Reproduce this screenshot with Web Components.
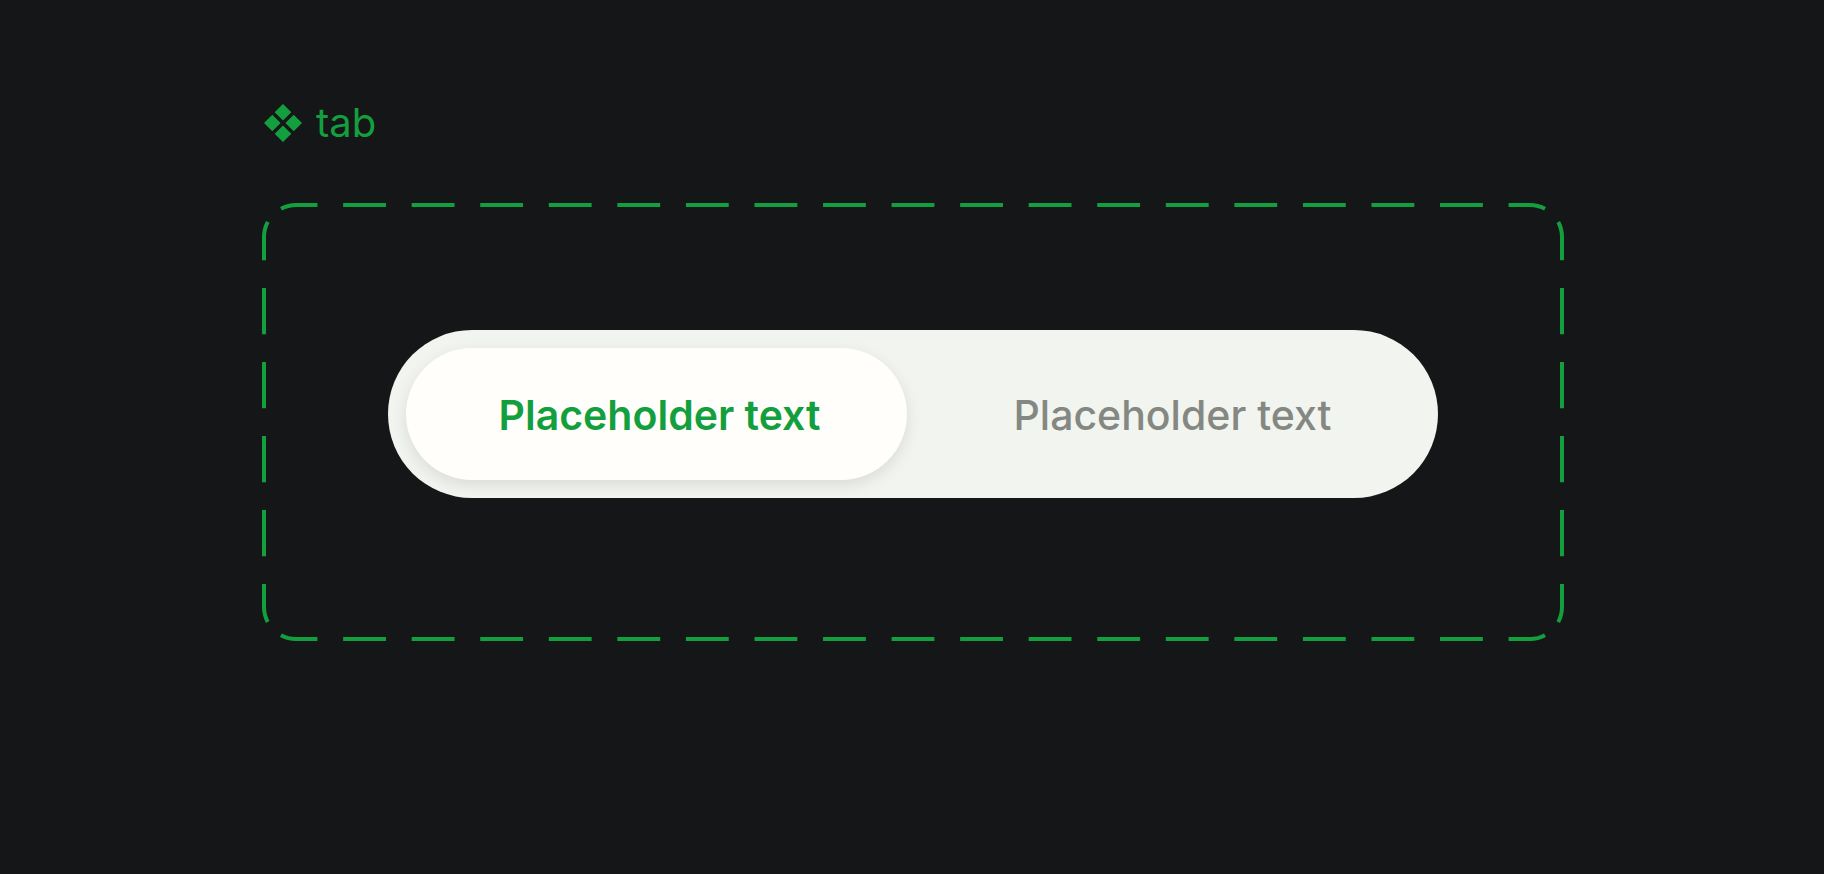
<!DOCTYPE html>
<html lang="en">
<head>
<meta charset="utf-8">
<meta name="viewport" content="width=device-width, initial-scale=1">
<title>tab</title>
<style>
  body { margin: 0; min-height: 100vh; background: #141617; font-family: Inter, "Liberation Sans", sans-serif; }
</style>
</head>
<body>
<component-sheet>
  <component-title slot="title">tab</component-title>
  <variant-frame>
    <tab-switch>
      <tab-option selected>Placeholder text</tab-option>
      <tab-option>Placeholder text</tab-option>
    </tab-switch>
  </variant-frame>
</component-sheet>

<script>
  class ComponentSheet extends HTMLElement {
    constructor() {
      super();
      this.attachShadow({ mode: "open" }).innerHTML = `
        <style>
          :host { display: block; padding: 99px 260px 99px 262px; --accent: #149f3f; }
          main { display: flex; flex-direction: column; gap: 56px; }
        </style>
        <main><slot name="title"></slot><slot></slot></main>`;
    }
  }

  class ComponentTitle extends HTMLElement {
    constructor() {
      super();
      this.attachShadow({ mode: "open" }).innerHTML = `
        <style>
          :host { display: block; color: var(--accent); }
          h1 { display: flex; align-items: center; gap: 14px; margin: 0; padding-left: 2px;
               font-size: 40px; line-height: 48px; font-weight: 400; }
          svg { width: 38px; height: 38px; flex: none; fill: currentColor; }
        </style>
        <h1>
          <svg viewBox="0 0 38 38" aria-hidden="true">
            <path d="M19 0l8.300 8.300L19 16.600l-8.300-8.300zM19 21.400l8.300 8.300L19 38l-8.300-8.300zM8.300 10.700l8.300 8.300-8.300 8.300L0 19zM29.700 10.700L38 19l-8.300 8.300-8.300-8.300z"/>
          </svg>
          <slot></slot>
        </h1>`;
    }
  }

  /* Rounded frame whose dashes are spread evenly over each side and each corner. */
  class VariantFrame extends HTMLElement {
    constructor() {
      super();
      this.attachShadow({ mode: "open" }).innerHTML = `
        <style>
          :host { display: block; position: relative; padding: 127px 126px 143px; }
          svg { position: absolute; inset: 0; width: 100%; height: 100%;
                fill: none; stroke: var(--accent); stroke-width: 4px; pointer-events: none; }
        </style>
        <svg aria-hidden="true"></svg>
        <slot></slot>`;
    }
    connectedCallback() {
      this.observer = new ResizeObserver(() => this.draw());
      this.observer.observe(this);
      this.draw();
    }
    disconnectedCallback() { this.observer.disconnect(); }
    draw() {
      const w = this.offsetWidth, h = this.offsetHeight, r = 32, e = 2;
      const R = w - e, B = h - e, across = w - 2 * (e + r), down = h - 2 * (e + r);
      const arc = Math.PI * r / 2, a = `a${r} ${r} 0 0 1 `;
      const parts = [
        [`M${e + r} ${e}h${across}`, across],
        [`M${R - r} ${e}${a}${r} ${r}`, arc],
        [`M${R} ${e + r}v${down}`, down],
        [`M${R} ${B - r}${a}${-r} ${r}`, arc],
        [`M${R - r} ${B}h${-across}`, across],
        [`M${e + r} ${B}${a}${-r} ${-r}`, arc],
        [`M${e} ${B - r}v${-down}`, down],
        [`M${e} ${e + r}${a}${r} ${-r}`, arc]
      ];
      this.shadowRoot.querySelector("svg").innerHTML = parts.map(([d, length]) => {
        const period = length / Math.max(1, Math.round(length / 70));
        const dash = period / 1.6;
        return `<path d="${d}" stroke-dasharray="${dash} ${period - dash}" stroke-dashoffset="${dash / 2}"/>`;
      }).join("");
    }
  }

  class TabSwitch extends HTMLElement {
    constructor() {
      super();
      this.attachShadow({ mode: "open" }).innerHTML = `
        <style>
          :host { display: block; }
          div { display: grid; grid-template-columns: 1fr 1fr; gap: 12px; padding: 18px;
                border-radius: 84px; background: #f1f4ef; }
        </style>
        <div role="group" aria-label="tab"><slot></slot></div>`;
      this.addEventListener("click", (event) => {
        const picked = event.target.closest("tab-option");
        if (!picked) return;
        for (const option of this.children) option.toggleAttribute("selected", option === picked);
      });
    }
  }

  class TabOption extends HTMLElement {
    static observedAttributes = ["selected"];
    constructor() {
      super();
      this.attachShadow({ mode: "open", delegatesFocus: true }).innerHTML = `
        <style>
          :host { display: block; }
          button { display: block; box-sizing: border-box; width: 100%; height: 132px; border: 0;
                   border-radius: 66px; padding: 2px 0 0 6px; background: none; color: #858882;
                   font-family: inherit; font-size: 41px; line-height: 52px; font-weight: 500;
                   white-space: nowrap; cursor: pointer; }
          button[aria-pressed="true"] { background: #fffefa; color: var(--accent); font-weight: 600;
                   box-shadow: 0 5px 16px rgba(0, 0, 0, 0.1); }
        </style>
        <button type="button" aria-pressed="false"><slot></slot></button>`;
    }
    attributeChangedCallback() {
      this.shadowRoot.querySelector("button").setAttribute("aria-pressed", String(this.hasAttribute("selected")));
    }
  }

  customElements.define("component-sheet", ComponentSheet);
  customElements.define("component-title", ComponentTitle);
  customElements.define("variant-frame", VariantFrame);
  customElements.define("tab-switch", TabSwitch);
  customElements.define("tab-option", TabOption);
</script>
</body>
</html>
